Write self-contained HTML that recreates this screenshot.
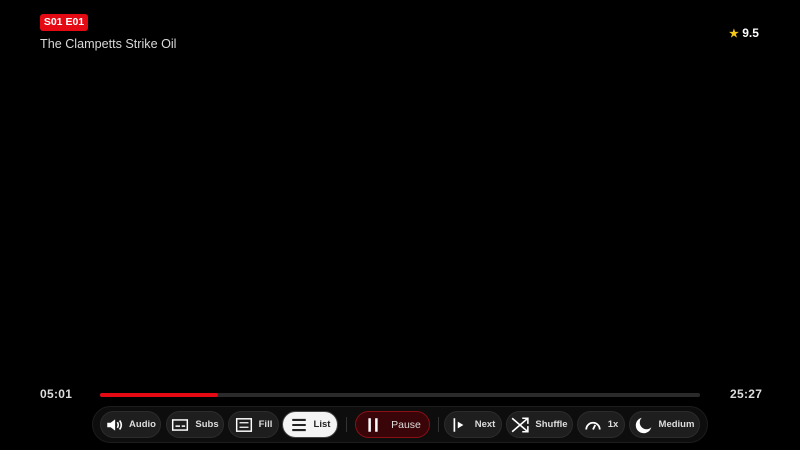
<!DOCTYPE html>
<html><head><style>
body{margin:0;width:800px;height:450px;background:#000;overflow:hidden;font-family:"Liberation Sans",sans-serif;position:relative}
.badge{position:absolute;left:40px;top:14px;height:17px;width:48px;background:#e50914;border-radius:3px;color:#fff;font-weight:bold;font-size:10.5px;line-height:17px;text-align:center}
.title{position:absolute;left:40px;top:37px;color:#d8d8d8;font-size:12.6px}
.rating{position:absolute;left:729px;top:26px;color:#fff;font-size:12px;font-weight:bold}
.rating span{color:#f5c518;font-size:11px}
.t{position:absolute;top:387px;color:#ddd;font-size:12px;font-weight:600;letter-spacing:0.3px}
.track{position:absolute;left:100px;top:393px;width:600px;height:4px;background:#2a2a2a;border-radius:2px}
.fill{width:118px;height:4px;background:#e50914;border-radius:2px}
.bar{position:absolute;left:92px;top:406px;width:616px;height:37px;border-radius:19px;background:#0d0d0d;border:1px solid #1c1c1c;box-sizing:border-box}
.b{position:absolute;top:411px;height:27px;border-radius:14px;background:#1e1e1e;border:1px solid #2c2c2c;box-sizing:border-box;color:#ddd;font-size:9.5px;font-weight:bold;display:flex;align-items:center;justify-content:center;gap:6px}
.b svg{width:18px;height:18px}
.sep{position:absolute;top:417px;width:1px;height:15px;background:#333}
</style></head><body>
<div class="badge">S01 E01</div>
<div class="title">The Clampetts Strike Oil</div>
<div class="rating"><span>★</span> 9.5</div>
<div class="t" style="left:40px">05:01</div>
<div class="t" style="left:730px">25:27</div>
<div class="track"><div class="fill"></div></div>
<div class="bar"></div>
<div class="b" style="left:100px;width:61px"><svg viewBox="0 0 16 16"><path d="M2 6h3l4-3v10l-4-3H2z" fill="#fff"/><path d="M11 5.5q1.5 2.5 0 5M13 4q3 4 0 8" stroke="#fff" stroke-width="1.4" fill="none"/></svg>Audio</div>
<div class="b" style="left:166px;width:58px"><svg viewBox="0 0 16 16"><rect x="1.5" y="3.5" width="13" height="9" fill="none" stroke="#fff" stroke-width="1.3"/><path d="M4 9h4M9.5 9h3" stroke="#fff" stroke-width="1.3"/></svg>Subs</div>
<div class="b" style="left:228px;width:51px"><svg viewBox="0 0 16 16"><rect x="1.5" y="2.5" width="13" height="11" fill="none" stroke="#fff" stroke-width="1.3"/><path d="M4 6h8M4 10h8" stroke="#fff" stroke-width="1.2"/></svg>Fill</div>
<div class="b" style="left:282px;width:56px;background:#f4f4f4;color:#222;border-color:#444"><svg viewBox="0 0 16 16"><path d="M2 3.5h12M2 8h12M2 12.5h12" stroke="#222" stroke-width="1.8"/></svg>List</div>
<div class="sep" style="left:346px"></div>
<div class="b" style="left:355px;width:75px;background:#3a0508;border-color:#8a1016;font-weight:normal;font-size:10.5px;gap:9px"><svg viewBox="0 0 16 16"><path d="M5 2v12M11 2v12" stroke="#fff" stroke-width="2.2"/></svg>Pause</div>
<div class="sep" style="left:438px"></div>
<div class="b" style="left:444px;width:58px"><svg viewBox="0 0 16 16"><path d="M3 2v12" stroke="#fff" stroke-width="1.5"/><path d="M6 5l5 3-5 3z" fill="#fff"/></svg>Next</div>
<div class="b" style="left:506px;width:67px"><svg viewBox="0 0 16 16"><path d="M1 2l14 12M1 14L15 2M10 2h5v5M15 9v5h-5" stroke="#fff" stroke-width="1.4" fill="none"/></svg>Shuffle</div>
<div class="b" style="left:577px;width:48px"><svg viewBox="0 0 16 16"><path d="M2 12a6 6 0 0 1 12 0" stroke="#fff" stroke-width="1.6" fill="none"/><path d="M8 12l2-4" stroke="#fff" stroke-width="1.6"/></svg>1x</div>
<div class="b" style="left:629px;width:71px"><svg viewBox="0 0 16 16"><path d="M6 1.5A7 7 0 1 0 14.5 10 5.5 5.5 0 0 1 6 1.5z" fill="#fff"/></svg>Medium</div>
</body></html>
